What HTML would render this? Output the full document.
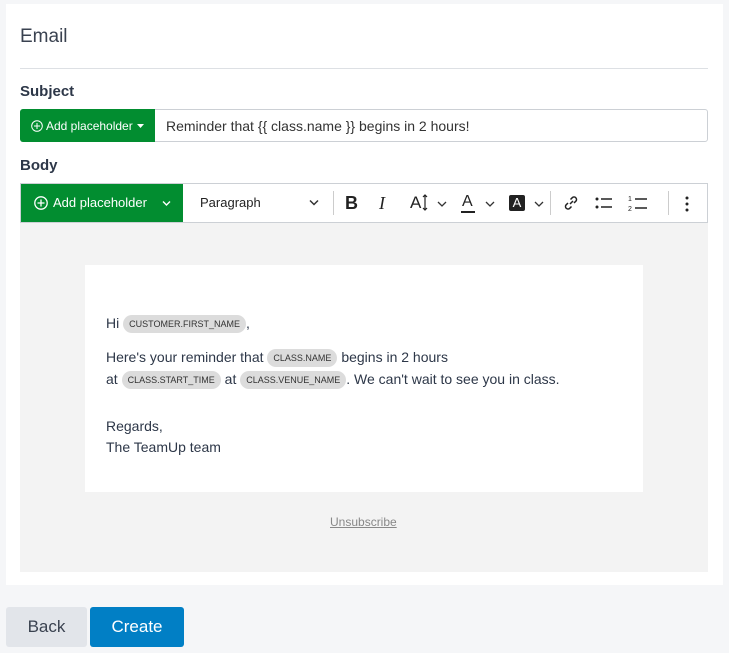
<!DOCTYPE html>
<html><head><style>
*{box-sizing:border-box;margin:0;padding:0}
body{width:729px;height:653px;background:#f5f6f8;font-family:"Liberation Sans",sans-serif;position:relative;overflow:hidden;color:#2d3748}
.a{position:absolute}
.card{left:6px;top:4px;width:717px;height:581px;background:#fff}
.pill{display:inline-block;background:#dcdcdc;border-radius:10px;font-size:9px;color:#333;padding:4px 6px;line-height:10px;vertical-align:1px}
.et{font-size:14px;color:#2d3748;line-height:21px}
svg{display:block}
</style></head><body>
<div class="a card"></div>
<div class="a" style="left:20px;top:26px;font-size:19px;color:#3a4250">Email</div>
<div class="a" style="left:20px;top:68px;width:688px;height:1px;background:#dde0e4"></div>
<div class="a" style="left:20px;top:83px;font-size:15px;font-weight:bold;color:#2d3748">Subject</div>
<div class="a" style="left:20px;top:109px;width:688px;height:33px;border:1px solid #ccd0d5;border-radius:3px"></div>
<div class="a" style="left:20px;top:109px;width:135px;height:33px;background:#028d30;border-radius:3px 0 0 3px"></div>
<div class="a" style="left:31px;top:120px"><svg width="12" height="12"><circle cx="6" cy="6" r="5.3" stroke="#fff" fill="none"/><path d="M6 3v6M3 6h6" stroke="#fff"/></svg></div>
<div class="a" style="left:46px;top:119px;font-size:12px;color:#fff">Add placeholder</div>
<div class="a" style="left:137px;top:124px"><svg width="8" height="5"><path d="M0 0h7l-3.5 4z" fill="#fff"/></svg></div>
<div class="a" style="left:166px;top:118px;font-size:14px;color:#333">Reminder that {{ class.name }} begins in 2 hours!</div>
<div class="a" style="left:20px;top:157px;font-size:15px;font-weight:bold;color:#2d3748">Body</div>
<div class="a" style="left:20px;top:183px;width:688px;height:40px;border:1px solid #ccd0d5;background:#fff"></div>
<div class="a" style="left:21px;top:184px;width:162px;height:38px;background:#028d30"></div>
<div class="a" style="left:34px;top:196px"><svg width="14" height="14"><circle cx="7" cy="7" r="6.2" stroke="#fff" stroke-width="1.3" fill="none"/><path d="M7 3.5v7M3.5 7h7" stroke="#fff" stroke-width="1.3"/></svg></div>
<div class="a" style="left:53px;top:195px;font-size:13px;color:#fff">Add placeholder</div>
<div class="a" style="left:162px;top:200px"><svg width="10" height="7"><path d="M1 1.5l3.5 3.5 3.5-3.5" stroke="#fff" stroke-width="1.4" fill="none"/></svg></div>
<div class="a" style="left:200px;top:195px;font-size:13px;color:#222">Paragraph</div>
<div class="a" style="left:309px;top:199px"><svg width="10" height="7"><path d="M1 1.5l4 4 4-4" stroke="#333" stroke-width="1.5" fill="none"/></svg></div>
<div class="a" style="left:333px;top:191px;width:1px;height:24px;background:#ccc"></div>
<div class="a" style="left:345px;top:193px;font-size:18px;font-weight:bold;color:#222">B</div>
<div class="a" style="left:379px;top:193px;font-size:18px;font-style:italic;font-family:'Liberation Serif',serif;color:#222">I</div>
<div class="a" style="left:410px;top:193px;font-size:17px;color:#222">A</div>
<div class="a" style="left:422px;top:194px"><svg width="6" height="17"><path d="M3 1v15M1 3l2-2 2 2M1 14l2 2 2-2" stroke="#222" stroke-width="1.2" fill="none"/></svg></div>
<div class="a" style="left:437px;top:201px"><svg width="10" height="7"><path d="M1 1l4 4 4-4" stroke="#333" stroke-width="1.3" fill="none"/></svg></div>
<div class="a" style="left:462px;top:193px;font-size:16px;color:#222">A</div>
<div class="a" style="left:461px;top:211px;width:14px;height:1.5px;background:#222"></div>
<div class="a" style="left:485px;top:201px"><svg width="10" height="7"><path d="M1 1l4 4 4-4" stroke="#333" stroke-width="1.3" fill="none"/></svg></div>
<div class="a" style="left:509px;top:195px;width:16px;height:16px;background:#222;color:#fff;font-size:13px;text-align:center;line-height:16px;border-radius:2px">A</div>
<div class="a" style="left:534px;top:201px"><svg width="10" height="7"><path d="M1 1l4 4 4-4" stroke="#333" stroke-width="1.3" fill="none"/></svg></div>
<div class="a" style="left:550px;top:191px;width:1px;height:24px;background:#ccc"></div>
<div class="a" style="left:562px;top:194px"><svg width="18" height="18"><path d="M8 10l3-3M6 9l-2 2a2.5 2.5 0 0 0 3.5 3.5l2-2M12 9l2-2a2.5 2.5 0 0 0-3.5-3.5l-2 2" stroke="#222" stroke-width="1.5" fill="none"/></svg></div>
<div class="a" style="left:594px;top:195px"><svg width="20" height="16"><circle cx="3" cy="4" r="1.5" fill="#222"/><circle cx="3" cy="12" r="1.5" fill="#222"/><path d="M7 4h11M7 12h11" stroke="#222" stroke-width="1.5"/></svg></div>
<div class="a" style="left:627px;top:193px"><svg width="22" height="20"><text x="1" y="8" font-size="7" font-family="Liberation Sans" fill="#222">1</text><text x="1" y="18" font-size="7" font-family="Liberation Sans" fill="#222">2</text><path d="M8 6h12M8 15h12" stroke="#222" stroke-width="1.5"/></svg></div>
<div class="a" style="left:668px;top:191px;width:1px;height:24px;background:#ccc"></div>
<div class="a" style="left:685px;top:196px"><svg width="4" height="16"><circle cx="2" cy="2" r="1.5" fill="#222"/><circle cx="2" cy="8" r="1.5" fill="#222"/><circle cx="2" cy="14" r="1.5" fill="#222"/></svg></div>
<div class="a" style="left:20px;top:223px;width:688px;height:349px;background:#f3f3f3"></div>
<div class="a" style="left:85px;top:265px;width:558px;height:227px;background:#fff"></div>
<div class="a et" style="left:106px;top:313px">Hi <span class="pill">CUSTOMER.FIRST_NAME</span>,</div>
<div class="a et" style="left:106px;top:347px">Here's your reminder that <span class="pill">CLASS.NAME</span> begins in 2 hours</div>
<div class="a et" style="left:106px;top:369px">at <span class="pill">CLASS.START_TIME</span> at <span class="pill">CLASS.VENUE_NAME</span>. We can't wait to see you in class.</div>
<div class="a et" style="left:106px;top:416px">Regards,</div>
<div class="a et" style="left:106px;top:437px">The TeamUp team</div>
<div class="a" style="left:330px;top:515px;font-size:12px;color:#888;text-decoration:underline">Unsubscribe</div>
<div class="a" style="left:6px;top:607px;width:81px;height:40px;background:#e2e5ea;border-radius:3px;font-size:17px;line-height:40px;text-align:center;color:#3a4250">Back</div>
<div class="a" style="left:90px;top:607px;width:94px;height:40px;background:#017fc5;border-radius:3px;font-size:17px;line-height:40px;text-align:center;color:#fff">Create</div>
</body></html>
